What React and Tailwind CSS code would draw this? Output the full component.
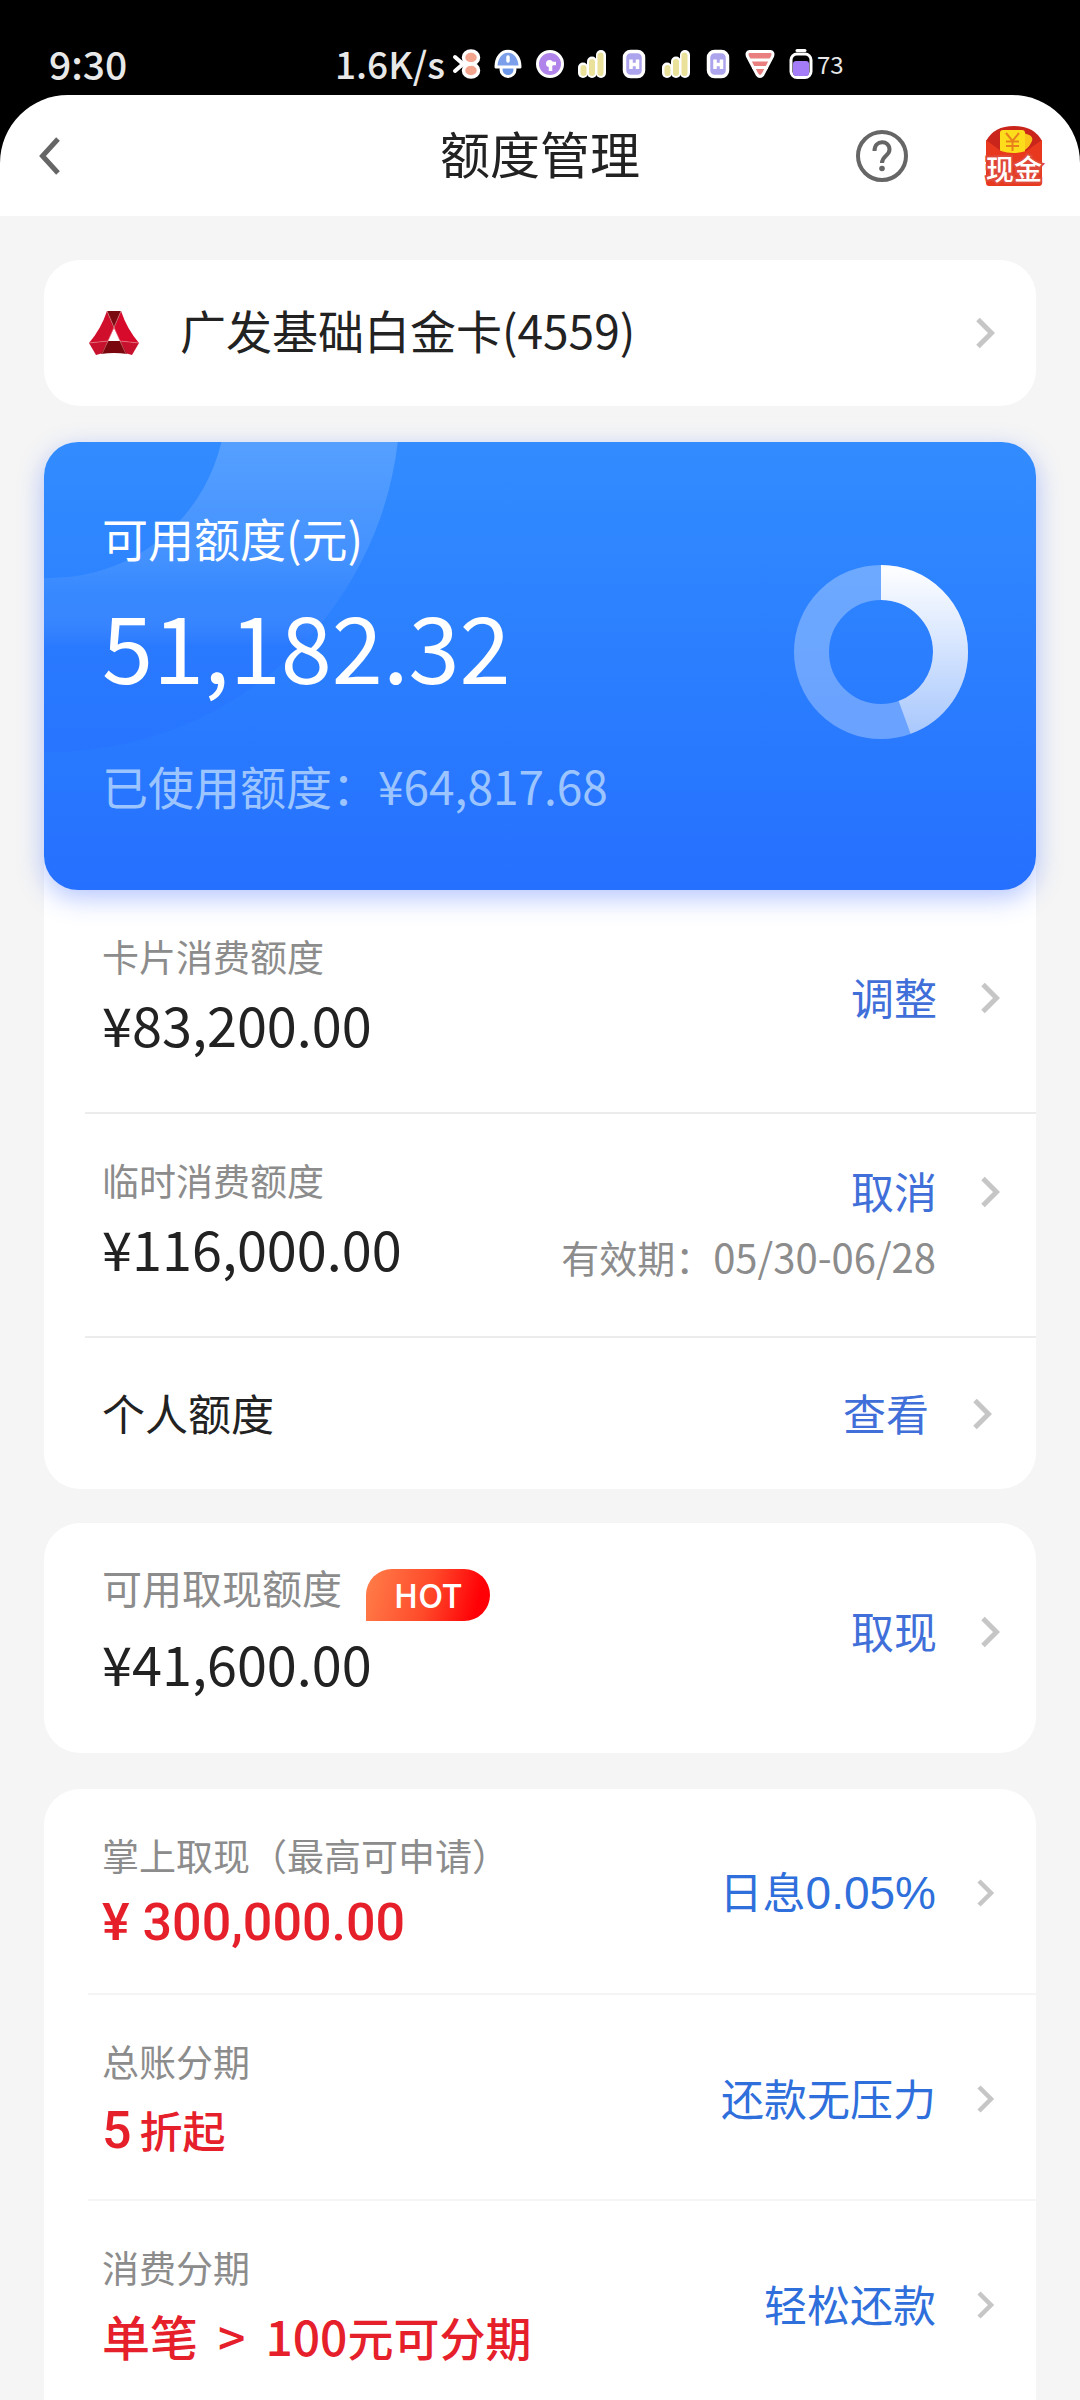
import React from 'react'
import clsx from 'clsx'

const AVAILABLE_RATIO = 0.444

const INSTALLMENT_ROWS = [
  {
    label: '掌上取现（最高可申请）',
    value: (
      <span className="font-['Roboto','Noto_Sans_CJK_SC',sans-serif] text-[52px] font-medium">¥ 300,000.00</span>
    ),
    action: (
      <>
        日息<span className="font-['Liberation_Sans',sans-serif] text-[46px]">0.05%</span>
      </>
    ),
  },
  {
    label: '总账分期',
    value: (
      <span className="flex items-baseline gap-2 text-[43px] font-medium">
        <span className="font-['Roboto',sans-serif] text-[52px]">5</span>
        折起
      </span>
    ),
    action: '还款无压力',
  },
  {
    label: '消费分期',
    value: (
      <span className="flex items-baseline gap-5 text-[48px] font-medium">
        <span>单笔</span>
        <span>&gt;</span>
        <span>
          100<span className="text-[46px]">元可分期</span>
        </span>
      </span>
    ),
    action: '轻松还款',
  },
]

function Chevron({ thin = false }) {
  return (
    <svg viewBox="0 0 20 32" className="h-8 w-5 shrink-0" fill="none" aria-hidden="true">
      {thin ? (
        <path d="M3 4 L15 16 L3 28" stroke="#c6c6c6" strokeWidth="4.5" />
      ) : (
        <path d="M3 2.5 L16.5 16 L3 29.5" stroke="#c6c6c6" strokeWidth="5" />
      )}
    </svg>
  )
}

function StatusIcon({ children }) {
  return (
    <svg viewBox="0 0 30 30" className="h-[30px] w-[30px]" aria-hidden="true">
      {children}
    </svg>
  )
}

function SignalIcon() {
  return (
    <StatusIcon>
      <g stroke="#fff" strokeLinecap="round" strokeWidth="10">
        <path d="M6 18.5 V24" />
        <path d="M15 12.5 V24" />
        <path d="M24 6 V24" />
      </g>
      <g stroke="#eae29a" strokeLinecap="round" strokeWidth="6">
        <path d="M6.5 19 V24" />
        <path d="M15 13 V24" />
        <path d="M23.5 6.5 V24" />
      </g>
    </StatusIcon>
  )
}

function NetworkIcon() {
  return (
    <StatusIcon>
      <rect x="5.5" y="2.5" width="19" height="25" rx="6" fill="#aca4ec" stroke="#fff" strokeWidth="3.5" />
      <path d="M12 10.5 V20 M18.5 10.5 V20 M12 15.5 H18.5" stroke="#fff" strokeWidth="3.5" />
    </StatusIcon>
  )
}

function StatusBar() {
  return (
    <div className="flex h-[95px] items-center pl-[49px] pt-[33px] text-[#e8e8e8]">
      <span className="w-[286px] shrink-0 pb-[2px] text-[39px] font-medium leading-[56px]">9:30</span>
      <span className="w-[116px] shrink-0 pb-[2px] text-[37px] font-medium leading-[56px]">1.6K/s</span>
      <div className="flex items-center gap-3">
        <StatusIcon>
          <path d="M4 8 L12 15 L4 22" stroke="#fff" strokeWidth="4" strokeLinecap="round" fill="none" />
          <ellipse cx="20" cy="8.5" rx="7.5" ry="6.5" fill="#f3a48d" stroke="#fff" strokeWidth="3.5" />
          <ellipse cx="20" cy="21.5" rx="7.5" ry="6.5" fill="#f3a48d" stroke="#fff" strokeWidth="3.5" />
          <path d="M11 15 H20" stroke="#fff" strokeWidth="4" />
        </StatusIcon>
        <StatusIcon>
          <circle cx="15" cy="20.5" r="7" fill="#6c96e8" stroke="#fff" strokeWidth="3" />
          <path d="M3 18 C3 -3 27 -3 27 18 Z" fill="#7b9fea" stroke="#fff" strokeWidth="3" strokeLinejoin="round" />
          <path d="M15 8 V12" stroke="#fff" strokeWidth="3.5" strokeLinecap="round" />
        </StatusIcon>
        <StatusIcon>
          <circle cx="15" cy="15" r="12.5" fill="#b084ea" stroke="#fff" strokeWidth="3" />
          <circle cx="14.5" cy="14.5" r="3.5" fill="#fff" />
          <path d="M14.5 14.5 H21 M15.5 14.5 V22" stroke="#fff" strokeWidth="3.5" />
        </StatusIcon>
        <SignalIcon />
        <NetworkIcon />
        <SignalIcon />
        <NetworkIcon />
        <StatusIcon>
          <path
            d="M4.5 2.5 H25.5 Q29 3 27.5 7.5 L18 25.5 Q15 29.5 12 25.5 L2.5 7.5 Q1 3 4.5 2.5 Z"
            fill="#e9807f"
            stroke="#fff"
            strokeWidth="3"
          />
          <path d="M4 11 H26 M7 18.5 H23" stroke="#fff" strokeWidth="3" />
        </StatusIcon>
        <div className="flex items-center">
          <StatusIcon>
            <path d="M10 1.5 H18" stroke="#fff" strokeWidth="3" strokeLinecap="round" />
            <rect x="4" y="5" width="20" height="23.5" rx="6" fill="#000" stroke="#fff" strokeWidth="3" />
            <rect x="6" y="12" width="16" height="15" rx="3" fill="#a57cf8" />
          </StatusIcon>
          <span className="text-[24px] leading-7">73</span>
        </div>
      </div>
    </div>
  )
}

function CashIcon() {
  return (
    <svg viewBox="0 0 60 62" className="h-[62px] w-[60px] overflow-visible" aria-hidden="true">
      <path d="M2 16 Q10 1 30 1 Q50 1 58 16 V40 H2 Z" fill="#c9251b" />
      <path d="M38 8 Q52 10 47 18 Q44 25 34 28 Z" fill="#fbc41a" />
      <rect x="16" y="5" width="25" height="26" rx="3" fill="#fddc1c" />
      <path
        d="M22 8 L28.5 16 L35 8 M28.5 16 V26 M22 16.5 H35 M22 21 H35"
        fill="none"
        stroke="#e8801c"
        strokeWidth="2"
      />
      <path d="M2 15 L17 26 Q29 30 42 26 L58 15 V58 Q58 61 55 61 H5 Q2 61 2 58 Z" fill="#e8391f" />
      <text
        x="30"
        y="55"
        textAnchor="middle"
        className="font-['Noto_Sans_CJK_SC',sans-serif] text-[28px] font-medium"
        fill="#fff"
        stroke="#e0483a"
        strokeWidth="4"
        paintOrder="stroke"
      >
        现金
      </text>
    </svg>
  )
}

function Header() {
  return (
    <header className="grid h-[121px] grid-cols-[1fr_auto_1fr] items-center rounded-t-[68px] bg-white px-9">
      <button type="button" aria-label="返回" className="justify-self-start">
        <svg viewBox="0 0 28 40" className="h-10 w-7" fill="none" aria-hidden="true">
          <path d="M22 3 L6.5 20 L22 37" stroke="#666" strokeWidth="5" />
        </svg>
      </button>
      <h1 className="pb-2 text-[50px] leading-[72px] text-[#222]">额度管理</h1>
      <div className="flex items-center gap-[76px] justify-self-end">
        <button type="button" aria-label="帮助">
          <svg viewBox="0 0 52 52" className="h-[52px] w-[52px]" fill="none" aria-hidden="true">
            <circle cx="26" cy="26" r="24" stroke="#666" strokeWidth="4" />
            <path
              d="M18.5 21 C18.5 9.5 33.5 9.5 33.5 19.5 C33.5 26 26 25.5 26 33"
              stroke="#666"
              strokeWidth="4"
            />
            <circle cx="26" cy="38.5" r="2.8" fill="#666" />
          </svg>
        </button>
        <button type="button" aria-label="现金">
          <CashIcon />
        </button>
      </div>
    </header>
  )
}

function BankLogo() {
  return (
    <svg viewBox="0 0 50 44" className="h-11 w-[50px] shrink-0" aria-hidden="true">
      <path d="M18 0 L25 17 L19 30 L0 32 Q12 18 18 0 Z" fill="#d00f2c" />
      <path d="M32 0 L25 17 L31 30 L50 32 Q38 18 32 0 Z" fill="#d80a2b" />
      <path d="M18 0 H32 L25 17 Z" fill="#7a0a10" />
      <path d="M0 32 L19 30 L14 42 L7 44 Z" fill="#c8122d" />
      <path d="M50 32 L31 30 L36 42 L43 44 Z" fill="#c8122d" />
      <path d="M19 30 H31 L38 43 Q25 41 12 43 Z" fill="#7a070e" />
      <path
        d="M0 32 L19 30 L13 43 M50 32 L31 30 L37 43 M18 0 L31 30 M32 0 L19 30"
        fill="none"
        stroke="#f0909a"
        strokeWidth="0.5"
      />
    </svg>
  )
}

function Donut() {
  const r = 69.5
  const length = 2 * Math.PI * r
  return (
    <svg viewBox="0 0 174 174" className="mt-[61px] h-[174px] w-[174px] shrink-0" fill="none" aria-hidden="true">
      <defs>
        {/* the arc is rotated by -90deg, so left-to-right here runs bottom-to-top on screen */}
        <linearGradient id="donut" gradientUnits="userSpaceOnUse" x1="0" y1="87" x2="174" y2="87">
          <stop offset="0" stopColor="#a6c6fd" />
          <stop offset="1" stopColor="#fff" />
        </linearGradient>
      </defs>
      <circle cx="87" cy="87" r={r} stroke="#fff" strokeOpacity="0.3" strokeWidth="35" />
      <circle
        cx="87"
        cy="87"
        r={r}
        stroke="url(#donut)"
        strokeWidth="35"
        strokeDasharray={`${length * AVAILABLE_RATIO} ${length}`}
        transform="rotate(-90 87 87)"
      />
    </svg>
  )
}

function BalanceCard() {
  return (
    <div className="relative flex h-[448px] justify-between overflow-hidden rounded-[34px] bg-linear-to-b from-[#328cff] to-[#2670ff] pl-[58px] pr-[68px] pt-[62px]">
      <svg className="absolute left-0 top-0 h-[320px] w-[400px]" viewBox="0 0 400 320" fill="none" aria-hidden="true">
        <defs>
          <linearGradient id="ring" gradientUnits="userSpaceOnUse" x1="0" y1="0" x2="0" y2="310">
            <stop offset="0" stopColor="#fff" stopOpacity="0.17" />
            <stop offset="0.38" stopColor="#fff" stopOpacity="0.1" />
            <stop offset="0.5" stopColor="#8ab0ff" stopOpacity="0.1" />
            <stop offset="0.66" stopColor="#2670ff" stopOpacity="0.4" />
            <stop offset="1" stopColor="#2670ff" stopOpacity="0.4" />
          </linearGradient>
        </defs>
        <circle cx="6" cy="-40" r="263" stroke="url(#ring)" strokeWidth="174" />
      </svg>
      <div className="relative">
        <p className="text-[46px] leading-[66px] text-white">可用额度(元)</p>
        <p className="text-[92px] leading-[148px] text-white">51,182.32</p>
        <p className="mt-[34px] text-[46px] leading-[66px] text-[#9cc5ff]">已使用额度：¥64,817.68</p>
      </div>
      <Donut />
    </div>
  )
}

function Action({ children, thin = false }) {
  return (
    <button
      type="button"
      className={clsx(
        'flex shrink-0 items-center text-[43px] leading-[64px]',
        thin ? 'gap-10 text-[#2f6fdc]' : 'gap-[43px] text-[#416fd9]',
      )}
    >
      <span className="pb-1">{children}</span>
      <Chevron thin={thin} />
    </button>
  )
}

function LimitText({ label, amount, badge }) {
  return (
    <div>
      {badge ? (
        <div className="flex h-[62px] items-end gap-6">
          <p className="self-start text-[40px] leading-[56px] text-[#8c8c8c]">{label}</p>
          <span className="h-[52px] w-[124px] rounded-[26px] rounded-bl-none bg-[linear-gradient(105deg,#ff7f4a_0%,#ff4a2a_50%,#ff0006_88%)] text-center text-[33px] font-medium leading-[50px] text-white">
            {badge}
          </span>
        </div>
      ) : (
        <p className="text-[37px] leading-[52px] text-[#8c8c8c]">{label}</p>
      )}
      <p className="text-[54px] leading-[84px] text-[#222]">{amount}</p>
    </div>
  )
}

export default function App() {
  return (
    <div className="min-h-screen bg-[#f5f5f5] font-['Noto_Sans_CJK_SC',sans-serif]">
      <div className="bg-black">
        <StatusBar />
        <Header />
      </div>

      <main className="mx-11 pt-11">
        <a href="#card" className="flex h-[146px] items-center rounded-[36px] bg-white pl-[45px] pr-[41px]">
          <BankLogo />
          <span className="grow pb-2 pl-[41px] text-[46px] leading-[66px] text-[#222]">广发基础白金卡(4559)</span>
          <Chevron />
        </a>

        <section className="mt-9 rounded-[36px] bg-white">
          <div className="rounded-[34px] shadow-[0_8px_26px_rgba(60,105,255,0.38)]">
            <BalanceCard />
          </div>
          <div className="ml-[41px] flex items-center justify-between border-b-2 border-[#ececec] pb-[46px] pl-[17px] pr-9 pt-10">
            <LimitText label="卡片消费额度" amount="¥83,200.00" />
            <Action>调整</Action>
          </div>
          <div className="ml-[41px] flex items-center justify-between border-b-2 border-[#ececec] pb-[46px] pl-[17px] pr-9 pt-10">
            <LimitText label="临时消费额度" amount="¥116,000.00" />
            <div>
              <div className="flex justify-end">
                <Action>取消</Action>
              </div>
              <p className="pr-16 text-[38px] leading-[60px] text-[#8c8c8c]">
                有效期：<span className="text-[40px]">05/30-06/28</span>
              </p>
            </div>
          </div>
          <div className="ml-[41px] flex h-[151px] items-center justify-between pl-[17px] pr-11">
            <p className="pb-1 text-[43px] leading-[64px] text-[#222]">个人额度</p>
            <Action>查看</Action>
          </div>
        </section>

        <section className="mt-[34px] flex items-center justify-between rounded-[36px] bg-white pb-12 pl-[58px] pr-9 pt-9">
          <LimitText label="可用取现额度" amount="¥41,600.00" badge="HOT" />
          <Action>取现</Action>
        </section>

        <section className="mt-9 rounded-t-[36px] bg-white">
          {INSTALLMENT_ROWS.map((row, i) => (
            <div
              key={row.label}
              className={clsx(
                'ml-11 flex items-center justify-between pl-[14px] pr-10 pt-10',
                i < INSTALLMENT_ROWS.length - 1 ? 'border-b-2 border-[#f5f5f5] pb-9' : 'pb-8',
              )}
            >
              <div>
                <p className="text-[37px] leading-[52px] text-[#8c8c8c]">{row.label}</p>
                <p className="flex h-[76px] items-start leading-[84px] text-[#e6202b]">{row.value}</p>
              </div>
              <Action thin>{row.action}</Action>
            </div>
          ))}
        </section>
      </main>
    </div>
  )
}
